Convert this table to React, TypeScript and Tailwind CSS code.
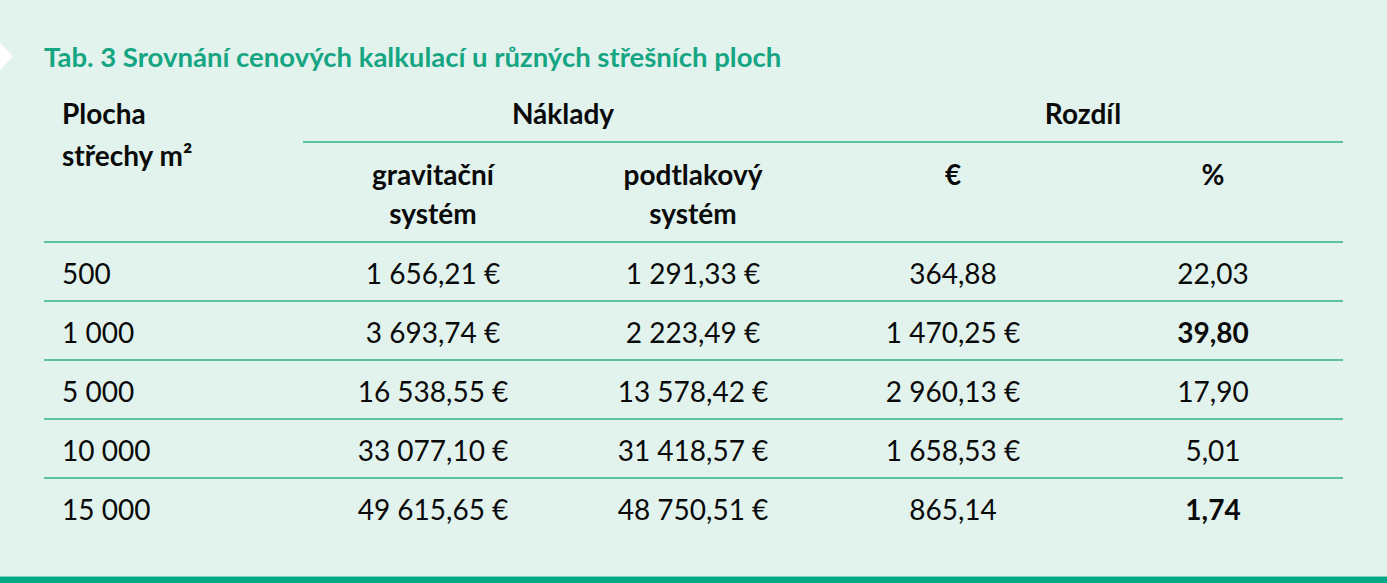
import React from "react";

const rows: { a: string; g: string; p: string; e: string; pct: string; bold?: boolean }[] = [
  { a: "500", g: "1 656,21 €", p: "1 291,33 €", e: "364,88", pct: "22,03" },
  { a: "1 000", g: "3 693,74 €", p: "2 223,49 €", e: "1 470,25 €", pct: "39,80", bold: true },
  { a: "5 000", g: "16 538,55 €", p: "13 578,42 €", e: "2 960,13 €", pct: "17,90" },
  { a: "10 000", g: "33 077,10 €", p: "31 418,57 €", e: "1 658,53 €", pct: "5,01" },
  { a: "15 000", g: "49 615,65 €", p: "48 750,51 €", e: "865,14", pct: "1,74", bold: true },
];

export default function App() {
  return (
    <div
      className="w-full h-[583px] bg-[#e2f3ed] flex flex-col text-[#0a0a0a]"
      style={{ fontFamily: "Lato, 'Open Sans', sans-serif" }}
    >
      <div className="flex items-center mt-[43px] h-[27px]">
        <svg width="13" height="27" viewBox="0 0 13 27" className="shrink-0">
          <polygon points="0,0 13,13.5 0,27" fill="#ffffff" />
        </svg>
        <div className="ml-[31px] text-[27.5px] leading-[28px] font-bold text-[#16a583] whitespace-nowrap">
          Tab. 3 Srovnání cenových kalkulací u různých střešních ploch
        </div>
      </div>

      <div className="ml-[44px] w-[1299px] mt-[15px] flex flex-col text-[28px]">
        {/* header */}
        <div className="flex h-[156px]">
          <div className="w-[259px] pl-[18px] pt-[7px] font-bold leading-[42px]">
            <div>Plocha</div>
            <div>střechy m²</div>
          </div>
          <div className="flex-1 flex flex-col">
            <div className="flex h-[56px] items-center font-bold">
              <div className="w-[520px] text-center">Náklady</div>
              <div className="w-[520px] text-center">Rozdíl</div>
            </div>
            <div className="h-[2px] bg-[#5cc2a6]" />
            <div className="flex pt-[12px] font-bold leading-[39px] text-center">
              <div className="w-[260px]">
                gravitační
                <br />
                systém
              </div>
              <div className="w-[260px]">
                podtlakový
                <br />
                systém
              </div>
              <div className="w-[260px]">€</div>
              <div className="w-[260px]">%</div>
            </div>
          </div>
        </div>
        <div className="h-[2px] bg-[#5cc2a6]" />

        {rows.map((r, i) => (
          <div key={i} className="flex flex-col">
            <div className="flex h-[57px] items-center pt-[2px]">
              <div className="w-[259px] pl-[18px]">{r.a}</div>
              <div className="w-[260px] text-center">{r.g}</div>
              <div className="w-[260px] text-center">{r.p}</div>
              <div className="w-[260px] text-center">{r.e}</div>
              <div className={"w-[260px] text-center" + (r.bold ? " font-bold" : "")}>{r.pct}</div>
            </div>
            {i < rows.length - 1 && <div className="h-[2px] bg-[#5cc2a6]" />}
          </div>
        ))}
      </div>

      <div className="mt-auto h-[7px] bg-[#00a886] border-t border-[#7fd0bb]" />
    </div>
  );
}
